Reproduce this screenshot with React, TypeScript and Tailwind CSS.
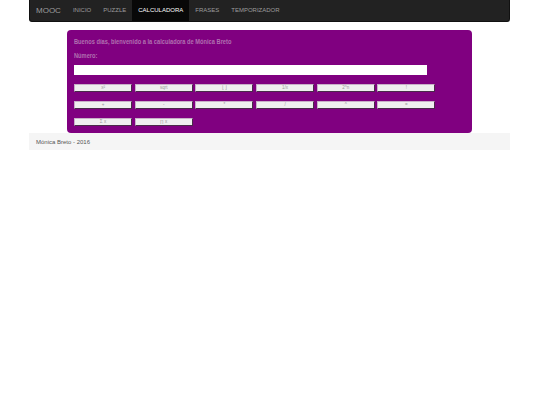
const enlaces = ["INICIO", "PUZZLE", "CALCULADORA", "FRASES", "TEMPORIZADOR"];

const filas = [
  ["x²", "sqrt", "⌊ ⌋", "1/x", "2^n", "!"],
  ["+", "-", "*", "/", "^", "="],
  ["Σ x", "∏ x"],
];

export default function App() {
  return (
    <div className="w-[540px] h-[405px] bg-white font-['Liberation_Sans',sans-serif]">
      <div className="mx-[29px] w-[481px]">
        {/* Barra de navegación */}
        <nav className="flex h-[22px] items-stretch rounded-b-[3px] bg-[#222222] border border-t-0 border-[#111111]">
          <span className="flex items-center pl-[6px] pr-[6px] text-[8px] text-[#9d9d9d]">MOOC</span>
          {enlaces.map((e) => (
            <a
              key={e}
              className={
                e === "CALCULADORA"
                  ? "flex items-center bg-[#080808] px-[6px] text-[6px] text-white"
                  : "flex items-center px-[6px] text-[6px] text-[#9d9d9d]"
              }
            >
              {e}
            </a>
          ))}
        </nav>

        {/* Calculadora */}
        <div className="ml-[38px] mt-[8px] h-[103px] w-[405px] rounded-[4px] bg-[#800080] pl-[7px] pt-[7px]">
          <h1 className="origin-left scale-x-[0.76] whitespace-nowrap text-[7.5px] leading-[9px] font-bold text-[#b070b0]">
            Buenos días, bienvenido a la calculadora de Mónica Breto
          </h1>
          <p className="mt-[5px] origin-left scale-x-[0.76] text-[7.5px] leading-[9px] font-bold text-[#b070b0]">Número:</p>
          <input type="text" className="mt-[5px] block h-[10px] w-[353px] bg-white" />
          <div className="mt-[9px] flex flex-col gap-[9px]">
            {filas.map((fila, i) => (
              <div key={i} className="flex gap-[2.7px]">
                {fila.map((b) => (
                  <button
                    key={b}
                    className="flex h-[8px] w-[58px] items-center justify-center border border-[#c8b0c8] border-r-[#4a2a4a] border-b-[#4a2a4a] bg-[#efefef] text-[4.5px] leading-none text-[#999999]"
                  >
                    {b}
                  </button>
                ))}
              </div>
            ))}
          </div>
        </div>

        {/* Pie */}
        <footer className="flex h-[17px] items-center bg-[#f5f5f5] pl-[7px] pt-[1px] text-[6px] text-[#555555]">
          Mónica Breto - 2016
        </footer>
      </div>
    </div>
  );
}
